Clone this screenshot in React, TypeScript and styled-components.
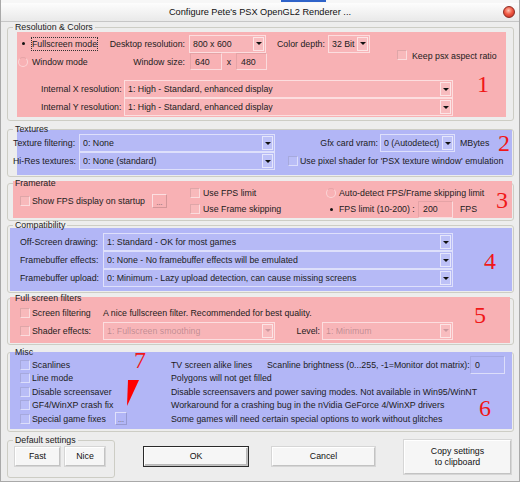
import React from "react";
import styled, { createGlobalStyle } from "styled-components";

const PINK = "#f8b1b4";
const BLUE = "#b2b6f6";

const GlobalStyle = createGlobalStyle`
  html, body { margin: 0; padding: 0; background: #ffffff; }
  body {
    font-family: "Liberation Sans", Arial, sans-serif;
    font-size: 8.8px;
    color: #1c1c1c;
  }
  * { box-sizing: border-box; }
`;

const Window = styled.div`
  position: relative;
  width: 520px;
  height: 482px;
  background: #ededed;
  border: 1px solid #a9a9a9;
  border-top: none;
  display: flex;
  flex-direction: column;
  overflow: hidden;
`;

const TopStrip = styled.div`
  height: 3px;
  background: #f7f7f7;
  display: flex;
`;

const TaskTab = styled.div`
  margin-left: 280px;
  width: 45px;
  height: 2px;
  background: #2f63c9;
`;

const TitleBar = styled.div`
  height: 19px;
  display: flex;
  align-items: center;
  justify-content: center;
  position: relative;
  background: linear-gradient(#fdfdfd, #e9e9e9);
  border-bottom: 1px solid #c6c6c6;
  font-size: 9.2px;
  color: #111;
`;

const Title = styled.span`
  flex: 1;
  text-align: center;
  padding-left: 16px;
`;

const CloseDot = styled.span`
  width: 12px;
  height: 12px;
  margin-right: 4px;
  border-radius: 50%;
  border: 1px solid #8c2a22;
  background: radial-gradient(circle at 45% 35%, #ffc4b4 0, #f05a44 45%, #b8241a 100%);
`;

const Body = styled.div`
  display: flex;
  flex-direction: column;
  padding: 0 5px 0 6px;
`;

const Group = styled.fieldset<{ $h: number; $mt: number; $w?: number }>`
  margin: ${(p) => p.$mt}px 0 0 0;
  padding: 0;
  min-width: 0;
  height: ${(p) => p.$h}px;
  width: ${(p) => (p.$w ? `${p.$w}px` : "auto")};
  flex: none;
  border: 1px solid #cdcdc5;
  border-radius: 3px;
`;

const Legend = styled.legend`
  margin-left: 5px;
  padding: 0 2px;
  height: 10px;
  line-height: 10px;
  font-size: 8.8px;
  color: #222;
`;

const Panel = styled.div<{
  $tone: "pink" | "blue";
  $mt: number;
  $ml: number;
  $mr: number;
  $h: number;
  $pt: number;
  $dir?: "row" | "column";
}>`
  display: flex;
  flex-direction: ${(p) => p.$dir ?? "column"};
  margin: ${(p) => `${p.$mt}px ${p.$mr}px 0 ${p.$ml}px`};
  padding-top: ${(p) => p.$pt}px;
  height: ${(p) => p.$h}px;
  background: ${(p) => (p.$tone === "pink" ? PINK : BLUE)};
`;

const Row = styled.div<{ $h: number; $mt?: number; $pl?: number }>`
  display: flex;
  align-items: center;
  flex: none;
  height: ${(p) => p.$h}px;
  margin-top: ${(p) => p.$mt ?? 0}px;
  padding-left: ${(p) => p.$pl ?? 0}px;
`;

const Col = styled.div<{ $w?: number; $pl?: number }>`
  display: flex;
  flex-direction: column;
  flex: none;
  width: ${(p) => (p.$w ? `${p.$w}px` : "auto")};
  padding-left: ${(p) => p.$pl ?? 0}px;
`;

const Text = styled.span<{ $w?: number; $right?: boolean; $ml?: number; $pr?: number }>`
  flex: none;
  white-space: nowrap;
  width: ${(p) => (p.$w ? `${p.$w}px` : "auto")};
  text-align: ${(p) => (p.$right ? "right" : "left")};
  margin-left: ${(p) => p.$ml ?? 0}px;
  padding-right: ${(p) => p.$pr ?? 0}px;
`;

const FocusLabel = styled.span<{ $w: number; $focus?: boolean }>`
  flex: none;
  width: ${(p) => p.$w}px;
  height: 14px;
  margin-left: 3px;
  padding-left: 1px;
  display: flex;
  align-items: center;
  white-space: nowrap;
  outline: ${(p) => (p.$focus ? "1px dotted #333" : "none")};
  outline-offset: -1px;
`;

const Combo = styled.div<{ $w: number; $ml?: number; $off?: boolean }>`
  flex: none;
  display: flex;
  align-items: center;
  width: ${(p) => p.$w}px;
  height: 18px;
  margin-left: ${(p) => p.$ml ?? 0}px;
  padding-left: 3px;
  border: 1px solid rgba(255, 255, 255, 0.55);
  background: rgba(255, 255, 255, 0.06);
  color: ${(p) => (p.$off ? "rgba(120, 90, 100, 0.45)" : "#1c1c1c")};
`;

const ComboText = styled.span`
  flex: 1;
  overflow: hidden;
  white-space: nowrap;
`;

const Arrow = styled.span<{ $off?: boolean }>`
  flex: none;
  width: 11px;
  height: 14px;
  margin-right: 1px;
  display: flex;
  align-items: center;
  justify-content: center;
  border: 1px solid rgba(255, 255, 255, 0.6);
  background: rgba(255, 255, 255, 0.1);

  &::after {
    content: "";
    border-left: 3px solid transparent;
    border-right: 3px solid transparent;
    border-top: 3px solid ${(p) => (p.$off ? "rgba(120, 90, 100, 0.35)" : "#111")};
  }
`;

const Field = styled.div<{ $w: number; $ml?: number; $h?: number }>`
  flex: none;
  display: flex;
  align-items: center;
  width: ${(p) => p.$w}px;
  height: ${(p) => p.$h ?? 17}px;
  margin-left: ${(p) => p.$ml ?? 0}px;
  padding-left: 4px;
  border: 1px solid rgba(255, 255, 255, 0.55);
  border-top-color: rgba(0, 0, 0, 0.08);
  border-left-color: rgba(0, 0, 0, 0.08);
`;

const Check = styled.span<{ $ml?: number }>`
  flex: none;
  width: 10px;
  height: 10px;
  margin-left: ${(p) => p.$ml ?? 0}px;
  border: 1px solid rgba(255, 255, 255, 0.5);
  border-top-color: rgba(0, 0, 0, 0.1);
  border-left-color: rgba(0, 0, 0, 0.1);
  background: rgba(255, 255, 255, 0.1);
`;

const Radio = styled.span<{ $on?: boolean; $ml?: number }>`
  flex: none;
  width: 10px;
  height: 10px;
  margin-left: ${(p) => p.$ml ?? 0}px;
  border-radius: 50%;
  display: flex;
  align-items: center;
  justify-content: center;
  border: 1px solid ${(p) => (p.$on ? "transparent" : "rgba(255, 255, 255, 0.45)")};
  border-top-color: ${(p) => (p.$on ? "transparent" : "rgba(0, 0, 0, 0.08)")};

  &::after {
    content: "";
    width: 3px;
    height: 3px;
    border-radius: 50%;
    background: ${(p) => (p.$on ? "#111" : "transparent")};
  }
`;

const Dots = styled.span<{ $w: number; $h: number; $ml: number }>`
  flex: none;
  width: ${(p) => p.$w}px;
  height: ${(p) => p.$h}px;
  margin-left: ${(p) => p.$ml}px;
  display: flex;
  align-items: flex-end;
  justify-content: center;
  padding-bottom: 1px;
  font-size: 7px;
  line-height: 7px;
  color: #555;
  border: 1px solid rgba(255, 255, 255, 0.6);
  border-right-color: rgba(0, 0, 0, 0.15);
  border-bottom-color: rgba(0, 0, 0, 0.15);
`;

const Bottom = styled.div`
  display: flex;
  align-items: center;
  margin-top: 3px;
  height: 43px;
`;

const Button = styled.button<{ $w: number; $h: number; $ml: number; $default?: boolean }>`
  flex: none;
  width: ${(p) => p.$w}px;
  height: ${(p) => p.$h}px;
  margin: 0 0 0 ${(p) => p.$ml}px;
  padding: 0;
  font-family: inherit;
  font-size: 8.8px;
  line-height: 11px;
  color: #111;
  background: #f6f6f6;
  border: 1px solid #c3c3c3;
  border-top-color: #ffffff;
  border-left-color: #ffffff;
  box-shadow: ${(p) =>
    p.$default ? "0 0 0 1px #2a2a2a, inset -1px -1px 0 #b8b8b8" : "0 0 0 1px #d6d6d6"};
`;

const ButtonRow = styled.div`
  display: flex;
  padding: 2px 0 0 7px;
`;

const Mark = styled.span<{ $x: number; $y: number }>`
  position: absolute;
  left: ${(p) => p.$x}px;
  top: ${(p) => p.$y}px;
  font-family: "Liberation Serif", "Times New Roman", serif;
  font-size: 24px;
  line-height: 1;
  color: #f01818;
`;

const Pointer = styled.svg`
  position: absolute;
  left: 124px;
  top: 379px;
`;

export default function App() {
  return (
    <>
      <GlobalStyle />
      <Window>
        <TopStrip>
          <TaskTab />
        </TopStrip>
        <TitleBar>
          <Title>Configure Pete's PSX OpenGL2 Renderer ...</Title>
          <CloseDot />
        </TitleBar>

        <Body>
          <Group $h={99} $mt={0}>
            <Legend>Resolution &amp; Colors</Legend>
            <Panel $tone="pink" $mt={0} $ml={9} $mr={7} $h={85} $pt={3}>
              <Row $h={17}>
                <Radio $on $ml={1} />
                <FocusLabel $w={67} $focus>Fullscreen mode</FocusLabel>
                <Text $w={87} $right>Desktop resolution:</Text>
                <Combo $w={77} $ml={4}>
                  <ComboText>800 x 600</ComboText>
                  <Arrow />
                </Combo>
                <Text $w={47} $ml={11}>Color depth:</Text>
                <Combo $w={42} $ml={4}>
                  <ComboText>32 Bit</ComboText>
                  <Arrow />
                </Combo>
              </Row>
              <Row $h={17} $mt={1}>
                <Radio $ml={1} />
                <FocusLabel $w={67}>Window mode</FocusLabel>
                <Text $w={87} $right>Window size:</Text>
                <Field $w={32} $ml={5}>640</Field>
                <Text $w={14} $right={false} style={{ textAlign: "center" }}>x</Text>
                <Field $w={31}>480</Field>
                <Check $ml={130} style={{ alignSelf: "flex-start", marginTop: -3 }} />
                <Text $ml={5} style={{ alignSelf: "flex-start", marginTop: -2 }}>
                  Keep psx aspect ratio
                </Text>
              </Row>
              <Row $h={18} $mt={10} $pl={24}>
                <Text $w={83}>Internal X resolution:</Text>
                <Combo $w={329}>
                  <ComboText>1: High - Standard, enhanced display</ComboText>
                  <Arrow />
                </Combo>
              </Row>
              <Row $h={18} $pl={24}>
                <Text $w={83}>Internal Y resolution:</Text>
                <Combo $w={329}>
                  <ComboText>1: High - Standard, enhanced display</ComboText>
                  <Arrow />
                </Combo>
              </Row>
            </Panel>
          </Group>

          <Group $h={53} $mt={3}>
            <Legend>Textures</Legend>
            <Panel $tone="blue" $mt={-4} $ml={9} $mr={1} $h={45} $pt={4}>
              <Row $h={18} style={{ marginLeft: -4 }}>
                <Text $w={66} $right $pr={6}>Texture filtering:</Text>
                <Combo $w={196}>
                  <ComboText>0: None</ComboText>
                  <Arrow />
                </Combo>
                <Text $w={103} $right>Gfx card vram:</Text>
                <Combo $w={75} $ml={2}>
                  <ComboText>0 (Autodetect)</ComboText>
                  <Arrow />
                </Combo>
                <Text $ml={5}>MBytes</Text>
              </Row>
              <Row $h={18} style={{ marginLeft: -4 }}>
                <Text $w={66} $right $pr={6}>Hi-Res textures:</Text>
                <Combo $w={196}>
                  <ComboText>0: None (standard)</ComboText>
                  <Arrow />
                </Combo>
                <Check $ml={13} />
                <Text $ml={2}>Use pixel shader for 'PSX texture window' emulation</Text>
              </Row>
            </Panel>
          </Group>

          <Group $h={43} $mt={1}>
            <Legend>Framerate</Legend>
            <Panel $tone="pink" $mt={-7} $ml={5} $mr={1} $h={37} $pt={4} $dir="row">
              <Col $w={177} $pl={7} style={{ justifyContent: "center", height: 32 }}>
                <Row $h={16}>
                  <Check />
                  <Text $ml={2}>Show FPS display on startup</Text>
                  <Dots $w={15} $h={14} $ml={7}>...</Dots>
                </Row>
              </Col>
              <Col $w={136}>
                <Row $h={16}>
                  <Check />
                  <Text $ml={3}>Use FPS limit</Text>
                </Row>
                <Row $h={16}>
                  <Check />
                  <Text $ml={3}>Use Frame skipping</Text>
                </Row>
              </Col>
              <Col>
                <Row $h={16}>
                  <Radio />
                  <Text $ml={3}>Auto-detect FPS/Frame skipping limit</Text>
                </Row>
                <Row $h={16}>
                  <Radio $on />
                  <Text $ml={3} $w={79}>FPS limit (10-200) :</Text>
                  <Field $w={35}>200</Field>
                  <Text $ml={7}>FPS</Text>
                </Row>
              </Col>
            </Panel>
          </Group>

          <Group $h={73} $mt={-1}>
            <Legend>Compatibility</Legend>
            <Panel $tone="blue" $mt={-2} $ml={2} $mr={1} $h={63} $pt={5}>
              <Row $h={18} $pl={10}>
                <Text $w={83}>Off-Screen drawing:</Text>
                <Combo $w={350}>
                  <ComboText>1: Standard - OK for most games</ComboText>
                  <Arrow />
                </Combo>
              </Row>
              <Row $h={18} $pl={10}>
                <Text $w={83}>Framebuffer effects:</Text>
                <Combo $w={350}>
                  <ComboText>0: None - No framebuffer effects will be emulated</ComboText>
                  <Arrow />
                </Combo>
              </Row>
              <Row $h={18} $pl={10}>
                <Text $w={83}>Framebuffer upload:</Text>
                <Combo $w={350}>
                  <ComboText>0: Minimum - Lazy upload detection, can cause missing screens</ComboText>
                  <Arrow />
                </Combo>
              </Row>
            </Panel>
          </Group>

          <Group $h={52} $mt={0}>
            <Legend>Full screen filters</Legend>
            <Panel $tone="pink" $mt={-6} $ml={2} $mr={3} $h={46} $pt={8}>
              <Row $h={16} $pl={10}>
                <Check />
                <Text $ml={2} $w={71}>Screen filtering</Text>
                <Text>A nice fullscreen filter. Recommended for best quality.</Text>
              </Row>
              <Row $h={19} $pl={10}>
                <Check />
                <Text $ml={2} $w={71}>Shader effects:</Text>
                <Combo $w={172} $off>
                  <ComboText>1: Fullscreen smoothing</ComboText>
                  <Arrow $off />
                </Combo>
                <Text $w={45} $right>Level:</Text>
                <Combo $w={131} $ml={2} $off>
                  <ComboText>1: Minimum</ComboText>
                  <Arrow $off />
                </Combo>
              </Row>
            </Panel>
          </Group>

          <Group $h={85} $mt={2}>
            <Legend>Misc</Legend>
            <Panel $tone="blue" $mt={-5} $ml={2} $mr={1} $h={77} $pt={6}>
              <Row $h={13.5} $pl={10}>
                <Check />
                <Text $ml={2} $w={139}>Scanlines</Text>
                <Text $w={96}>TV screen alike lines</Text>
                <Text>Scanline brightness (0...255, -1=Monitor dot matrix):</Text>
                <Field $w={35} $h={18} style={{ marginLeft: "auto", marginRight: 7 }}>0</Field>
              </Row>
              <Row $h={13.5} $pl={10}>
                <Check />
                <Text $ml={2} $w={139}>Line mode</Text>
                <Text>Polygons will not get filled</Text>
              </Row>
              <Row $h={13.5} $pl={10}>
                <Check />
                <Text $ml={2} $w={139}>Disable screensaver</Text>
                <Text>Disable screensavers and power saving modes. Not available in Win95/WinNT</Text>
              </Row>
              <Row $h={13.5} $pl={10}>
                <Check />
                <Text $ml={2} $w={139}>GF4/WinXP crash fix</Text>
                <Text>Workaround for a crashing bug in the nVidia GeForce 4/WinXP drivers</Text>
              </Row>
              <Row $h={13.5} $pl={10}>
                <Check />
                <Text $ml={2} $w={83}>Special game fixes</Text>
                <Dots $w={12} $h={13} $ml={0}>...</Dots>
                <Text $ml={44}>Some games will need certain special options to work without glitches</Text>
              </Row>
            </Panel>
          </Group>

          <Bottom>
            <Group $h={43} $mt={0} $w={108}>
              <Legend>Default settings</Legend>
              <ButtonRow>
                <Button $w={45} $h={19} $ml={0}>Fast</Button>
                <Button $w={40} $h={19} $ml={5}>Nice</Button>
              </ButtonRow>
            </Group>
            <Button $w={104} $h={19} $ml={29} $default>OK</Button>
            <Button $w={103} $h={19} $ml={24}>Cancel</Button>
            <Button $w={107} $h={34} $ml={29}>
              Copy settings
              <br />
              to clipboard
            </Button>
          </Bottom>
        </Body>

        <Mark $x={476} $y={72}>1</Mark>
        <Mark $x={497} $y={131}>2</Mark>
        <Mark $x={495} $y={188}>3</Mark>
        <Mark $x={483} $y={249}>4</Mark>
        <Mark $x={473} $y={303}>5</Mark>
        <Mark $x={478} $y={396}>6</Mark>
        <Mark $x={133} $y={348}>7</Mark>
        <Pointer width="16" height="28" viewBox="0 0 16 28">
          <polygon points="3,1 14,1 2,27" fill="#ff0000" />
        </Pointer>
      </Window>
    </>
  );
}
